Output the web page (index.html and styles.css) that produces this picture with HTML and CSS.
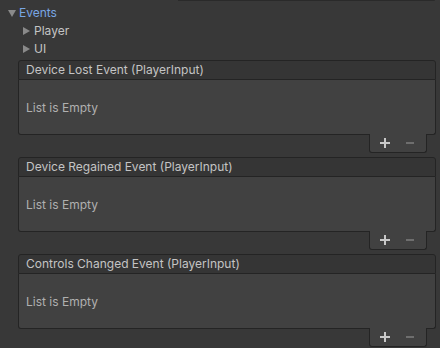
FILE: index.html
```html
<!DOCTYPE html>
<html>
<head>
<meta charset="utf-8">
<link rel="stylesheet" href="styles.css">
</head>
<body>
<div class="panel">
  <div class="top-field"></div>
  <div class="fold-row fold-open">
    <span class="tri tri-down"></span><span class="fold-label active">Events</span>
  </div>
  <div class="fold-row fold-child">
    <span class="tri tri-right"></span><span class="fold-label">Player</span>
  </div>
  <div class="fold-row fold-child">
    <span class="tri tri-right"></span><span class="fold-label">UI</span>
  </div>

  <div class="list">
    <div class="list-header">Device Lost Event (PlayerInput)</div>
    <div class="list-body">List is Empty</div>
    <div class="list-footer"><span class="btn plus"></span><span class="btn minus"></span></div>
  </div>
  <div class="list">
    <div class="list-header">Device Regained Event (PlayerInput)</div>
    <div class="list-body">List is Empty</div>
    <div class="list-footer"><span class="btn plus"></span><span class="btn minus"></span></div>
  </div>
  <div class="list">
    <div class="list-header">Controls Changed Event (PlayerInput)</div>
    <div class="list-body">List is Empty</div>
    <div class="list-footer"><span class="btn plus"></span><span class="btn minus"></span></div>
  </div>
</div>
</body>
</html>
```
FILE: styles.css
```css
html, body {
  margin: 0;
  padding: 0;
  background: #383838;
}
body {
  width: 440px;
  height: 348px;
  overflow: hidden;
  font-family: Inter, "Noto Sans", sans-serif;
  font-size: 12px;
  color: #c4c4c4;
}
.panel {
  display: flex;
  flex-direction: column;
}
.top-field {
  margin-left: 178px;
  margin-right: 5px;
  height: 1px;
  background: #2a2a2a;
  border-bottom-right-radius: 2px;
  margin-bottom: 3px;
}
.fold-row {
  height: 18px;
  display: flex;
  align-items: center;
}
.fold-open {
  padding-left: 8px;
}
.fold-child {
  padding-left: 23px;
}
.tri {
  display: inline-block;
  width: 0;
  height: 0;
}
.tri-down {
  border-left: 4px solid transparent;
  border-right: 4px solid transparent;
  border-top: 7px solid #8a8a8a;
  margin-right: 3px;
}
.tri-right {
  border-top: 4.5px solid transparent;
  border-bottom: 4.5px solid transparent;
  border-left: 7px solid #8a8a8a;
  margin-right: 4px;
}
.fold-label {
  line-height: 18px;
  color: #c4c4c4;
}
.fold-label.active {
  color: #79a6e3;
}
.list {
  margin: 2px 4px 0 18px;
  display: flex;
  flex-direction: column;
}
.list + .list {
  margin-top: 4px;
}
.list-header {
  height: 18px;
  line-height: 18px;
  padding-left: 7px;
  background: #353535;
  border: 1px solid #242424;
  border-radius: 3px 3px 0 0;
  color: #c4c4c4;
}
.list-body {
  height: 54px;
  padding-left: 7px;
  display: flex;
  align-items: center;
  background: #414141;
  border: 1px solid #242424;
  border-top: none;
  border-radius: 0 0 3px 3px;
  color: #b0b0b0;
}
.list-footer {
  align-self: flex-end;
  margin-right: 9px;
  margin-top: -1px;
  width: 58px;
  height: 19px;
  box-sizing: border-box;
  background: #414141;
  border: 1px solid #242424;
  border-top: none;
  border-radius: 0 0 3px 3px;
  display: flex;
  align-items: center;
  padding-left: 10px;
  gap: 15px;
}
.btn {
  display: inline-block;
  width: 10px;
  height: 10px;
  position: relative;
}
.plus::before, .plus::after, .minus::before {
  content: "";
  position: absolute;
  background: #c8c8c8;
}
.plus::before {
  left: 0;
  top: 4px;
  width: 10px;
  height: 2px;
}
.plus::after {
  left: 4px;
  top: 0;
  width: 2px;
  height: 10px;
}
.minus::before {
  left: 1px;
  top: 4px;
  width: 8px;
  height: 2px;
  background: #6e6e6e;
}
```
